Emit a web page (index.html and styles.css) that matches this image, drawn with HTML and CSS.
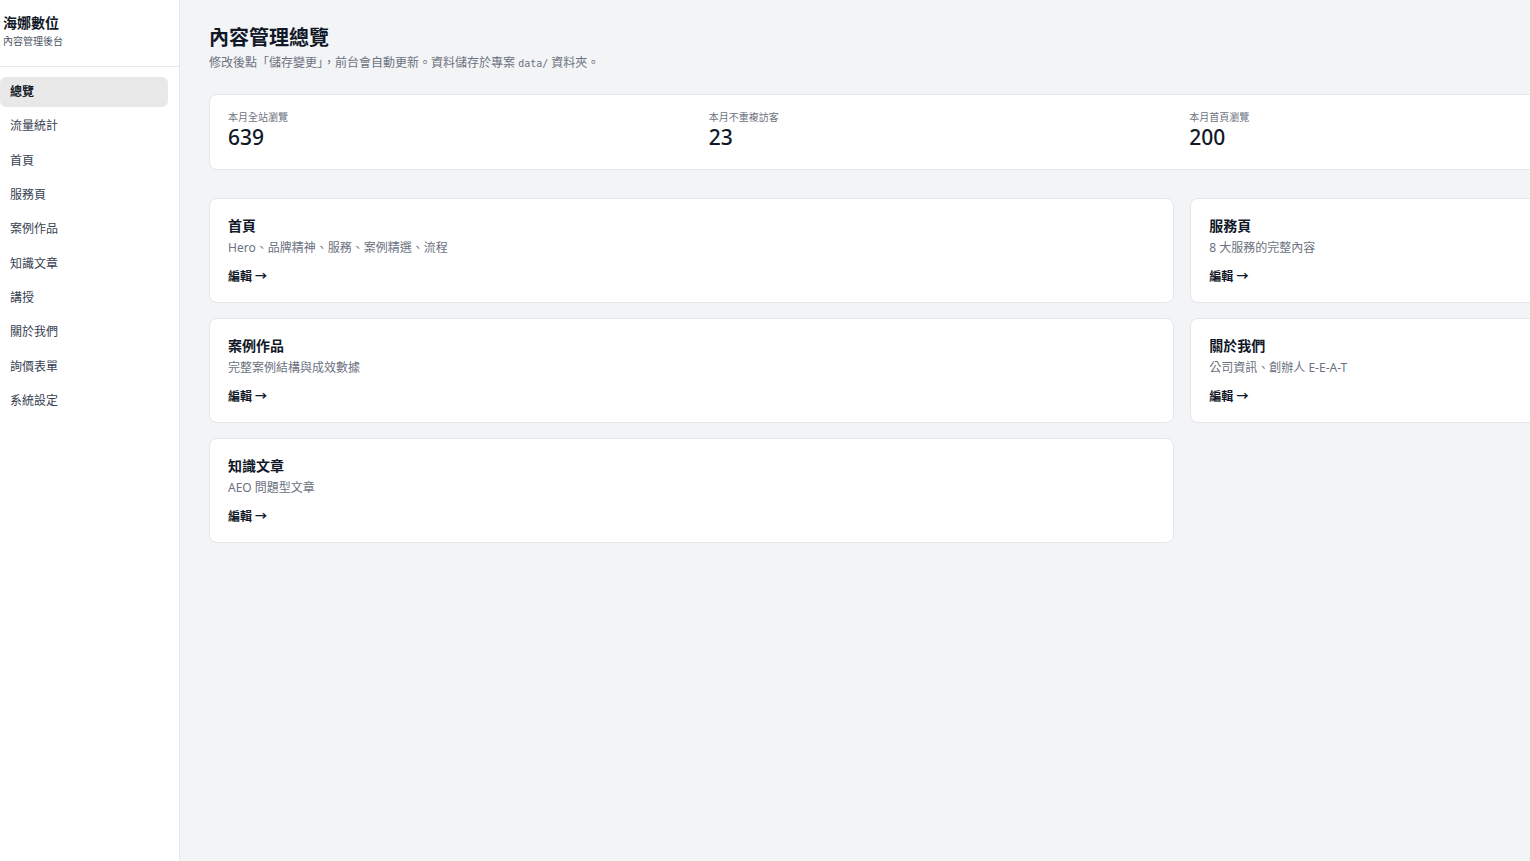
FILE: index.html
```html
<!DOCTYPE html>
<html lang="zh-Hant">
<head>
    <meta charset="UTF-8">
    <meta name="viewport" content="width=device-width, initial-scale=1.0">
    <title>海娜數位 - 內容管理後台</title>
    <link rel="stylesheet" href="styles.css">
</head>
<body>
    <aside class="sidebar">
        <div class="brand">
            <div class="brand-name">海娜數位</div>
            <div class="brand-sub">內容管理後台</div>
        </div>
        <nav class="nav">
            <a class="nav-item active" href="#">總覽</a>
            <a class="nav-item" href="#">流量統計</a>
            <a class="nav-item" href="#">首頁</a>
            <a class="nav-item" href="#">服務頁</a>
            <a class="nav-item" href="#">案例作品</a>
            <a class="nav-item" href="#">知識文章</a>
            <a class="nav-item" href="#">講授</a>
            <a class="nav-item" href="#">關於我們</a>
            <a class="nav-item" href="#">詢價表單</a>
            <a class="nav-item" href="#">系統設定</a>
        </nav>
    </aside>

    <main class="main">
        <h1 class="page-title">內容管理總覽</h1>
        <p class="page-desc">修改後點「儲存變更」，前台會自動更新。資料儲存於專案 <code>data/</code> 資料夾。</p>

        <!-- Monthly stats -->
        <section class="stats">
            <div class="stat">
                <div class="stat-label">本月全站瀏覽</div>
                <div class="stat-value">639</div>
            </div>
            <div class="stat">
                <div class="stat-label">本月不重複訪客</div>
                <div class="stat-value">23</div>
            </div>
            <div class="stat">
                <div class="stat-label">本月首頁瀏覽</div>
                <div class="stat-value">200</div>
            </div>
        </section>

        <!-- Page cards -->
        <section class="cards">
            <div class="card">
                <h3>首頁</h3>
                <p>Hero、品牌精神、服務、案例精選、流程</p>
                <a href="#">編輯 →</a>
            </div>
            <div class="card">
                <h3>服務頁</h3>
                <p>8 大服務的完整內容</p>
                <a href="#">編輯 →</a>
            </div>
            <div class="card">
                <h3>案例作品</h3>
                <p>完整案例結構與成效數據</p>
                <a href="#">編輯 →</a>
            </div>
            <div class="card">
                <h3>關於我們</h3>
                <p>公司資訊、創辦人 E-E-A-T</p>
                <a href="#">編輯 →</a>
            </div>
            <div class="card">
                <h3>知識文章</h3>
                <p>AEO 問題型文章</p>
                <a href="#">編輯 →</a>
            </div>
        </section>
    </main>
</body>
</html>
```

FILE: styles.css
```css
/* Layout */
body {
    margin: 0;
    font-family: "Noto Sans", "Noto Sans CJK TC", sans-serif;
    background: #f3f4f6;
    color: #111827;
    display: flex;
    min-height: 100vh;
    overflow: hidden;
}

/* Sidebar */
.sidebar {
    width: 180px;
    flex-shrink: 0;
    background: #ffffff;
    border-right: 1px solid #e5e7eb;
    box-sizing: border-box;
}

.brand {
    padding: 13px 3px 18px;
    border-bottom: 1px solid #e5e7eb;
}

.brand-name {
    font-size: 14px;
    font-weight: 700;
    line-height: 20px;
    color: #111827;
}

.brand-sub {
    font-size: 10px;
    line-height: 14px;
    margin-top: 1px;
    color: #4b5563;
}

.nav {
    display: flex;
    flex-direction: column;
    gap: 4.33px;
    padding: 10px 11px 0 0;
}

.nav-item {
    display: block;
    height: 30px;
    line-height: 30px;
    padding-left: 10px;
    font-size: 12px;
    color: #374151;
    text-decoration: none;
    border-radius: 6px;
}

.nav-item.active {
    background: #e8e8e8;
    color: #111827;
    font-weight: 700;
}

/* Main */
.main {
    padding: 24px 0 0 29px;
    width: 1464px;
    flex-shrink: 0;
}

.page-title {
    margin: 0;
    font-size: 20px;
    line-height: 28px;
    font-weight: 700;
}

.page-desc {
    margin: 2px 0 0;
    font-size: 12px;
    line-height: 18px;
    color: #6b7280;
}

.page-desc code {
    font-family: "DejaVu Sans Mono", monospace;
    font-size: 10px;
}

/* Stats */
.stats {
    margin-top: 21px;
    background: #ffffff;
    border: 1px solid #e5e7eb;
    border-radius: 8px;
    padding: 15px 18px 19px;
    display: grid;
    grid-template-columns: repeat(3, 1fr);
    gap: 16px;
}

.stat-label {
    font-size: 10px;
    line-height: 14px;
    color: #6b7280;
}

.stat-value {
    font-size: 21px;
    line-height: 26px;
    font-weight: 500;
    color: #111827;
}

/* Cards */
.cards {
    margin-top: 28px;
    display: grid;
    grid-template-columns: 2fr 1fr;
    gap: 15px 16px;
}

.card {
    background: #ffffff;
    border: 1px solid #e5e7eb;
    border-radius: 8px;
    padding: 17px 18px 15px;
}

.card h3 {
    margin: 0;
    font-size: 14px;
    line-height: 20px;
    font-weight: 600;
}

.card p {
    margin: 2px 0 0;
    font-size: 12px;
    line-height: 20px;
    color: #6b7280;
}

.card a {
    display: block;
    margin-top: 9px;
    font-size: 12px;
    line-height: 20px;
    font-weight: 600;
    color: #111827;
    text-decoration: none;
}
```
